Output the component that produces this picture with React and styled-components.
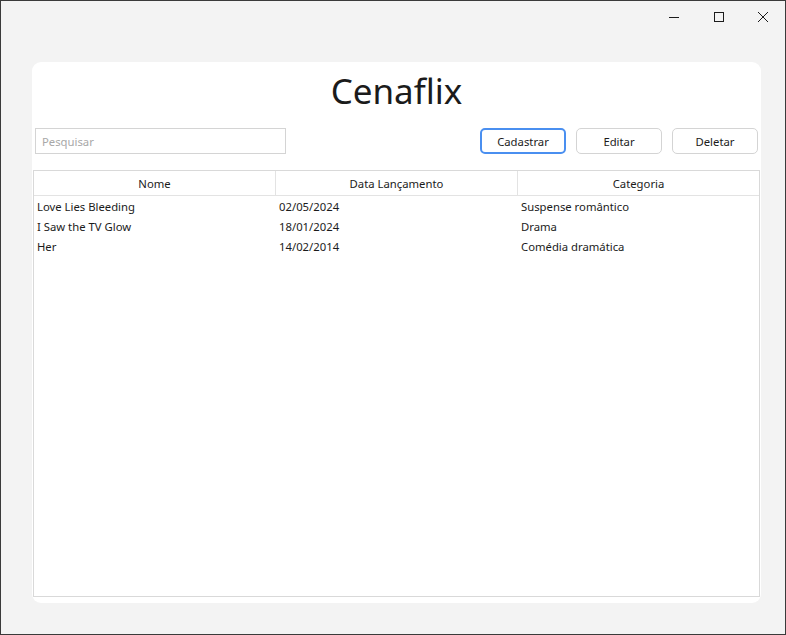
import React from 'react'
import styled, { createGlobalStyle } from 'styled-components'

const filmes = [
  { nome: 'Love Lies Bleeding', data: '02/05/2024', categoria: 'Suspense romântico' },
  { nome: 'I Saw the TV Glow', data: '18/01/2024', categoria: 'Drama' },
  { nome: 'Her', data: '14/02/2014', categoria: 'Comédia dramática' },
]

function App() {
  return (
    <>
      <GlobalStyle />
      <Window>
        <TitleBar>
          <WinButton aria-label="minimizar">
            <svg width="10" height="10" viewBox="0 0 10 10">
              <path d="M0 5.5h10" stroke="#1b1b1b" strokeWidth="1" />
            </svg>
          </WinButton>
          <WinButton aria-label="maximizar">
            <svg width="10" height="10" viewBox="0 0 10 10">
              <rect x="0.5" y="0.5" width="9" height="9" fill="none" stroke="#1b1b1b" strokeWidth="1" />
            </svg>
          </WinButton>
          <WinButton aria-label="fechar">
            <svg width="10" height="10" viewBox="0 0 10 10">
              <path d="M0 0L10 10M10 0L0 10" stroke="#1b1b1b" strokeWidth="1" />
            </svg>
          </WinButton>
        </TitleBar>
        <Body>
          <Panel>
            <Title>Cenaflix</Title>
            <Toolbar>
              <Search placeholder="Pesquisar" />
              <Actions>
                <Button focused>Cadastrar</Button>
                <Button>Editar</Button>
                <Button>Deletar</Button>
              </Actions>
            </Toolbar>
            <Table>
              <HeaderRow>
                <HeadCell>Nome</HeadCell>
                <HeadCell>Data Lançamento</HeadCell>
                <HeadCell last>Categoria</HeadCell>
              </HeaderRow>
              {filmes.map((f) => (
                <Row key={f.nome}>
                  <Cell>{f.nome}</Cell>
                  <Cell>{f.data}</Cell>
                  <Cell>{f.categoria}</Cell>
                </Row>
              ))}
            </Table>
          </Panel>
        </Body>
      </Window>
    </>
  )
}

export default App

const GlobalStyle = createGlobalStyle`
  * { box-sizing: border-box; }
  body {
    margin: 0;
    font-family: "Noto Sans", "Open Sans", sans-serif;
    background: #f3f3f3;
  }
`
const Window = styled.div`
  width: 786px;
  height: 635px;
  border: 1px solid #3a3a3a;
  background: #f3f3f3;
  display: flex;
  flex-direction: column;
`
const TitleBar = styled.div`
  height: 31px;
  display: flex;
  justify-content: flex-end;
  align-items: center;
`
const WinButton = styled.div`
  width: 45px;
  height: 31px;
  display: flex;
  align-items: center;
  justify-content: center;
  &:last-child { width: 44px; }
`
const Body = styled.div`
  flex: 1;
  padding: 30px 24px 30px 31px;
`
const Panel = styled.div`
  width: 729px;
  height: 541px;
  background: #ffffff;
  border-radius: 9px;
  padding: 0 1px 6px 1px;
  display: flex;
  flex-direction: column;
`
const Title = styled.h1`
  margin: 0;
  height: 56px;
  display: flex;
  align-items: center;
  justify-content: center;
  font-size: 35px;
  font-weight: 400;
  color: #1b1b1b;
`
const Toolbar = styled.div`
  margin-top: 10px;
  height: 26px;
  padding: 0 2px;
  display: flex;
  justify-content: space-between;
`
const Search = styled.input`
  width: 251px;
  height: 26px;
  border: 1px solid #d4d4d4;
  padding: 0 6px;
  font-family: inherit;
  font-size: 11.3px;
  color: #1b1b1b;
  outline: none;
  &::placeholder { color: #a8a8a8; }
`
const Actions = styled.div`
  display: flex;
  gap: 10px;
`
const Button = styled.button`
  width: 86px;
  height: 26px;
  border-radius: 5px;
  background: #ffffff;
  border: ${(p) => (p.focused ? '2px solid #4a8ff0' : '1px solid #d4d4d4')};
  font-family: inherit;
  font-size: 11.3px;
  color: #1b1b1b;
  padding: 1px 0 0;
`
const Table = styled.div`
  margin-top: 16px;
  flex: 1;
  border: 1px solid #d9d9d9;
  display: flex;
  flex-direction: column;
`
const HeaderRow = styled.div`
  display: grid;
  grid-template-columns: 242px 242px 1fr;
  height: 25px;
  border-bottom: 1px solid #e3e3e3;
`
const HeadCell = styled.div`
  display: flex;
  align-items: center;
  justify-content: center;
  font-size: 11.3px;
  color: #1b1b1b;
  border-right: ${(p) => (p.last ? 'none' : '1px solid #e3e3e3')};
`
const Row = styled.div`
  display: grid;
  grid-template-columns: 242px 242px 1fr;
  height: 20px;
`
const Cell = styled.div`
  display: flex;
  align-items: center;
  padding-left: 3px;
  font-size: 11.3px;
  color: #1b1b1b;
`
